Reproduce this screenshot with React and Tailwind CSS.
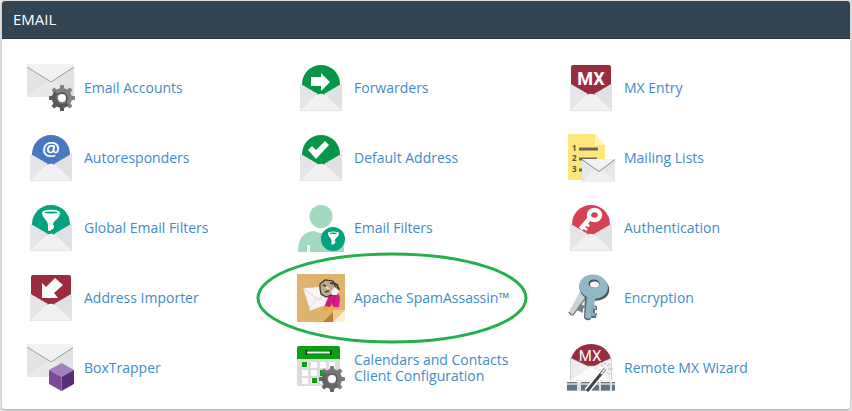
function Icon({ children }) {
  return (
    <svg viewBox="0 0 48 48" className="size-12 shrink-0 overflow-visible" aria-hidden="true">
      {children}
    </svg>
  );
}

function OpenEnvelope({ color, square, children }) {
  return (
    <Icon>
      {square ? (
        <path d="M4 3q0-2 2-2h36q2 0 2 2v18L28 31h-8L4 21z" fill={color} />
      ) : (
        <path d="M5 20a19 19 0 1 1 38 0v2L28 31h-8L5 22z" fill={color} />
      )}
      <path d="M3 19.500L21 30 3 47z" fill="#e4e5e8" />
      <path d="M45 19.500L27 30 45 47z" fill="#dfe1e4" />
      <path d="M3 47L20 31q4-2.500 8 0l17 16z" fill="#f1f1f2" />
      <path d="M3 46.600h42" stroke="#dfdfe1" strokeWidth="0.800" />
      {children}
    </Icon>
  );
}

function ClosedEnvelope() {
  return (
    <>
      <path d="M0 0h47v33H0z" fill="#eeeeef" />
      <path d="M0 3l21 14L0 33z" fill="#e2e3e5" />
      <path d="M47 3L26 17l21 16z" fill="#e2e3e5" />
      <path d="M0 33l20-15 4 2.500 4-2.500 19 15z" fill="#e9e9eb" />
      <path d="M0 0h47v3L24 18 0 3z" fill="#f2f2f2" />
      <path d="M0 3l24 15L47 3" fill="none" stroke="#8f8f91" strokeWidth="0.900" />
    </>
  );
}

function Gear({ x, y, light, dark }) {
  return (
    <g transform={`translate(${x} ${y})`}>
      {[0, 45, 90, 135, 180, 225, 270, 315].map((angle) => (
        <path
          key={angle}
          d="M-2.500-8l.700-5h3.600l.700 5z"
          fill={angle > 135 && angle < 315 ? dark : light}
          transform={`rotate(${angle})`}
        />
      ))}
      <circle r="10" fill={light} />
      <path d="M-7.100-7.100a10 10 0 1 0 14.200 14.200z" fill={dark} />
      <circle r="6" fill={dark} />
      <path d="M-4.200-4.200a6 6 0 0 0 8.400 8.400z" fill={light} />
      <circle r="4" fill="#fff" />
    </g>
  );
}

function Funnel() {
  return (
    <>
      <path d="M15 9q0 3 3 6 3 3 3 6v4l5 0v-4q0-3 4-6 3-3 3-6z" fill="#fff" />
      <path d="M21 23v3.500l2 .500 4-3V21z" fill="#fff" />
      <ellipse cx="24" cy="8.500" rx="9" ry="2.800" fill="#fff" />
      <ellipse cx="24" cy="8.500" rx="6.500" ry="1.100" fill="#06a17e" />
    </>
  );
}

const EmailAccountsIcon = () => (
  <Icon>
    <ClosedEnvelope />
    <Gear x={35} y={34} light="#808285" dark="#58595b" />
  </Icon>
);

const ForwardersIcon = () => (
  <OpenEnvelope color="#069746">
    <path d="M14 13h10V9l9 9-9 9v-5H14z" fill="#fff" />
  </OpenEnvelope>
);

const MxEntryIcon = () => (
  <OpenEnvelope color="#9b2c40" square>
    <text x="24" y="21" textAnchor="middle" fill="#fff" className="font-['Roboto',sans-serif] text-[18px] font-bold">
      MX
    </text>
  </OpenEnvelope>
);

const AutorespondersIcon = () => (
  <OpenEnvelope color="#4878be">
    <text x="24" y="22" textAnchor="middle" fill="#fff" className="font-['Open_Sans',sans-serif] text-[20px] font-semibold">
      @
    </text>
  </OpenEnvelope>
);

const DefaultAddressIcon = () => (
  <OpenEnvelope color="#069746">
    <path d="M11 16l4-4 4 4 9-9 4 4-13 14z" fill="#fff" />
  </OpenEnvelope>
);

const MailingListsIcon = () => (
  <Icon>
    <path d="M1 2q0-2 2-2h25l10 11v33q0 2-2 2H3q-2 0-2-2z" fill="#fde67c" />
    <path d="M28 0l10 11H28z" fill="#fff4bd" />
    <g fill="#575344" className="font-['Open_Sans',sans-serif] text-[8px] font-bold">
      <text x="5" y="17">1</text>
      <text x="5" y="27">2</text>
      <text x="5" y="38">3</text>
    </g>
    <path d="M12 15h19M12 25h18M12 36h8" stroke="#6b6758" strokeWidth="3" />
    <path d="M15 25h33v23H15z" fill="#e6e6e8" />
    <path d="M15 48l13-13 4 2 4-2 12 13z" fill="#efeff0" />
    <path d="M15 25h33v1L32 38 15 26z" fill="#f2f2f2" />
    <path d="M15 25.500l17 12 16-12" fill="none" stroke="#77787a" strokeWidth="0.900" />
  </Icon>
);

const GlobalFiltersIcon = () => (
  <OpenEnvelope color="#06a17e">
    <Funnel />
  </OpenEnvelope>
);

const EmailFiltersIcon = () => (
  <Icon>
    <circle cx="24" cy="12.500" r="11.500" fill="#a3d9c0" />
    <path d="M1 48q0-20 16-21 7 4 15 0 15 2 15 18v3H13v-7h-3v7z" fill="#a3d9c0" />
    <circle cx="36" cy="35" r="12" fill="#06a17e" />
    <g transform="translate(21.500 24) scale(.62)">
      <Funnel />
    </g>
  </Icon>
);

const AuthenticationIcon = () => (
  <OpenEnvelope color="#d34255">
    <ellipse cx="27.500" cy="11" rx="5.500" ry="5" fill="none" stroke="#fff" strokeWidth="4.500" />
    <path d="M23 14L13.500 25" stroke="#fff" strokeWidth="4.500" />
    <path d="M15 22l5 4M18 18.500l4 4" stroke="#fff" strokeWidth="2.600" />
  </OpenEnvelope>
);

const AddressImporterIcon = () => (
  <OpenEnvelope color="#9b2c40" square>
    <path d="M15 9l4 4 9-9 8 7-9 8 4 5H15z" fill="#fff" />
  </OpenEnvelope>
);

const SpamAssassinIcon = () => (
  <Icon>
    <path d="M0 0h48v48H0z" fill="#dfb26d" />
    <path d="M26 48l11-11v11z" fill="#b67c38" />
    <path d="M36 48V36h12z" fill="#f3c98a" />
    <path d="M36 48l12-12v12z" fill="#fdeed2" />
    <path d="M6 14l23-2 6 17-22 8z" fill="#f6f4f6" stroke="#c9b49a" strokeWidth="0.600" />
    <path d="M6 14l16 12 8-13" fill="none" stroke="#dad6d8" />
    <path d="M12 36l7-12 15 5" fill="none" stroke="#e3dfe2" />
    <path d="M31 20l10-1 2 5-1 9-5 1-2-5-3 1z" fill="#e2158a" />
    <path d="M36 32l2-11" stroke="#a90c68" />
    <path d="M28 31l4-10 4 2-2 9-5 3z" fill="#d4148a" />
    <path d="M25 36l4-4 3 1-2 4zM33 35l4-2 4 0-5 3z" fill="#e7a82b" />
    <path d="M23 10l5-4 8 1 3 7-2 6-8 3-5-3-1-5z" fill="#bfa98f" stroke="#40332b" strokeWidth="1.200" />
    <path d="M26 11l3 1M33 9l3 1M28 18l4-1" stroke="#4b3a30" strokeWidth="1.500" />
    <path d="M29 13l3 2" stroke="#e9dac8" strokeWidth="2" />
    <path d="M35 8l5 3 2 5" fill="none" stroke="#3b3848" strokeWidth="2" />
    <path d="M34 17l4-4 4 4-2 4-5 0z" fill="#f4f0ee" />
  </Icon>
);

const EncryptionIcon = () => (
  <Icon>
    <path d="M13 17l9 5-14 18q-4 2-6-2z" fill="#cdd1d5" />
    <path d="M2 38q1 3 4 3l13-18" fill="none" stroke="#6b7379" strokeWidth="1.200" />
    <path d="M13 30l5 2-2 3 0 4-6-3z" fill="#777f86" />
    <ellipse cx="27.500" cy="14.500" rx="15" ry="12" fill="#4b555c" transform="rotate(12 27 14)" />
    <path d="M18 22h9l-3 23q-4 3-7-1z" fill="#526068" />
    <path d="M20 22h9l-5 22q-4 2-6-1z" fill="#8eb7c4" />
    <path d="M26 32h4v4h-2v3h2l-1 5h-5l1-11z" fill="#577681" />
    <path d="M25 31h4v4h-3v4h3l-1 3h-4z" fill="#85acb9" />
    <ellipse cx="26.500" cy="12.500" rx="14.500" ry="12" fill="#90b8c5" transform="rotate(12 26 12.500)" />
    <ellipse cx="27" cy="9.500" rx="5.500" ry="4" fill="#46545b" />
    <ellipse cx="27.500" cy="10.500" rx="4.500" ry="3" fill="#fff" />
  </Icon>
);

const BoxTrapperIcon = () => (
  <Icon>
    <ClosedEnvelope />
    <path d="M46 0h2v34h-2z" fill="#fff" />
    <path d="M34.500 19L47 26 34.500 33 22 26z" fill="#a080bd" />
    <path d="M22 26l12.500 7v14L22 40z" fill="#7a4a99" />
    <path d="M47 26l-12.500 7v14L47 40z" fill="#5a2d78" />
  </Icon>
);

const CalendarIcon = () => (
  <Icon>
    <path d="M0 12h43v28q0 2-2 2H2q-2 0-2-2z" fill="#dcdcdd" />
    <path d="M0 4q0-2 2-2h39q2 0 2 2v11H0z" fill="#0aa015" />
    <path d="M9.500 6v5M33.500 6v5" stroke="#17351a" strokeWidth="2" />
    <path d="M10 8.500h23" stroke="#1c5a20" strokeWidth="3.500" />
    <path d="M10 8.500h23" stroke="#f0f0f0" strokeWidth="2" />
    {[18, 26, 34].map((y) =>
      [5, 14, 23, 32].map((x) => <path key={`${x}-${y}`} d={`M${x} ${y}h6v6h-6z`} fill="#fff" />),
    )}
    <path d="M5 18h5v5H5zM23 26h6v6h-6zM15 34h5v5h-5z" fill="#0aa015" />
    <Gear x={35} y={35} light="#77797b" dark="#626466" />
  </Icon>
);

const RemoteMxIcon = () => (
  <Icon>
    <path d="M4 15C9-5 39-5 44 15L29 22H19z" fill="#9b2c40" />
    <path d="M3.500 14l17 8h7l17-8v22h-41z" fill="#eeeeef" stroke="#b5b5b7" strokeWidth="0.600" />
    <path d="M4 36l18-12q2-1 4 0l18 12z" fill="#fbfbfb" />
    <text x="23" y="17" textAnchor="middle" fill="#fff" className="font-['Roboto',sans-serif] text-[15px] font-normal">
      MX
    </text>
    <path d="M0 38h48v9H0z" fill="#66737f" />
    <path d="M0 40h48" stroke="#b8c4cd" strokeWidth="2" />
    <path d="M0 46.500h48" stroke="#9aa5ae" />
    <path d="M10 38h4v9h-4zM32 38h2v9h-2zM43 38h2v9h-2z" fill="#dce2e7" />
    <path d="M20 47l18-22" stroke="#fff" strokeWidth="6" />
    <path d="M20 47l18-22" stroke="#444" strokeWidth="3" />
    <path d="M34 30l4-5" stroke="#eee" strokeWidth="2" />
    <path d="M38 17v5M33 19l3 4M31 24h4M40 22l5-4M41 25h6M40 28l4 4" stroke="#fff" strokeWidth="2" />
    <path d="M38 18v3M34 20l2 3M40 22l4-3M41 25h5M40 28l3 3" stroke="#999" strokeWidth="0.800" />
  </Icon>
);

const tools = [
  { name: "Email Accounts", Art: EmailAccountsIcon },
  { name: "Forwarders", Art: ForwardersIcon },
  { name: "MX Entry", Art: MxEntryIcon },
  { name: "Autoresponders", Art: AutorespondersIcon },
  { name: "Default Address", Art: DefaultAddressIcon },
  { name: "Mailing Lists", Art: MailingListsIcon },
  { name: "Global Email Filters", Art: GlobalFiltersIcon },
  { name: "Email Filters", Art: EmailFiltersIcon },
  { name: "Authentication", Art: AuthenticationIcon },
  { name: "Address Importer", Art: AddressImporterIcon },
  { name: "Apache SpamAssassin™", Art: SpamAssassinIcon, circled: true },
  { name: "Encryption", Art: EncryptionIcon },
  { name: "BoxTrapper", Art: BoxTrapperIcon },
  { name: "Calendars and Contacts Client Configuration", Art: CalendarIcon },
  { name: "Remote MX Wizard", Art: RemoteMxIcon },
];

export default function App() {
  return (
    <main className="bg-[#e2e2e2] px-0.5 pt-px pb-0.5 font-['Open_Sans',sans-serif]">
      <section className="overflow-hidden rounded-[3px] bg-white shadow-[0_1px_2px_#aaaaaa]">
        <h1 className="border-b border-[#28364a] bg-[#334453] px-[11px] py-2 text-[15px] leading-[21px] font-normal text-white">
          EMAIL
        </h1>
        <ul className="grid grid-cols-3 gap-y-[22px] pt-[25px] pr-[13px] pb-[17px] pl-[25px]">
          {tools.map(({ name, Art, circled }) => (
            <li key={name} className="relative">
              <a href="#" className="flex items-center gap-[9px] text-[14px] leading-4 text-[#428bca]">
                <Art />
                <span className="max-w-[170px]">{name}</span>
              </a>
              {circled && (
                <svg
                  viewBox="0 0 272 92"
                  className="pointer-events-none absolute -top-[22px] -left-[41px] h-[92px] w-[272px]"
                  aria-hidden="true"
                >
                  <ellipse cx="136" cy="46" rx="134" ry="44" fill="none" stroke="#22b14c" strokeWidth="3" />
                </svg>
              )}
            </li>
          ))}
        </ul>
      </section>
    </main>
  );
}
